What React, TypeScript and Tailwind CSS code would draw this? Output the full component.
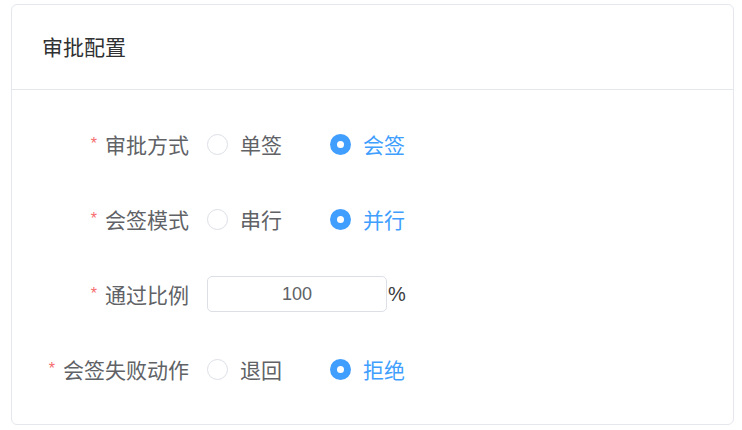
import React from "react";

const font = { fontFamily: '"Liberation Sans", "Noto Sans CJK SC", sans-serif' };

function Radio({ label, checked }: { label: string; checked?: boolean }) {
  return (
    <div className="flex items-center">
      {checked ? (
        <span className="flex h-[21px] w-[21px] items-center justify-center rounded-full bg-[#409eff]">
          <span className="h-[7px] w-[7px] rounded-full bg-white" />
        </span>
      ) : (
        <span className="h-[21px] w-[21px] rounded-full border border-[#dcdfe6] bg-white" />
      )}
      <span className={`ml-[12px] mt-[3px] text-[21px] leading-none ${checked ? "text-[#409eff]" : "text-[#606266]"}`}>{label}</span>
    </div>
  );
}

function Row({ label, children }: { label: string; children: React.ReactNode }) {
  return (
    <div className="flex h-[44px] items-center">
      <div className="flex w-[177px] shrink-0 items-center justify-end text-[21px] leading-none text-[#606266]">
        <span className="mr-[8px] text-[16px] text-[#f56c6c]">*</span>
        <span className="mt-[3px]">{label}</span>
      </div>
      <div className="ml-[18px] flex items-center">{children}</div>
    </div>
  );
}

function RadioPair({ a, b }: { a: string; b: string }) {
  return (
    <div className="flex items-center gap-[48px]">
      <Radio label={a} />
      <Radio label={b} checked />
    </div>
  );
}

export default function App() {
  return (
    <div className="h-[430px] w-[742px] bg-white pl-[11px] pt-[4px]" style={font}>
      <div className="w-[723px] h-[421px] rounded-[6px] border border-[#e4e7ed] bg-white">
        <div className="flex h-[85px] items-center border-b border-[#e4e7ed] pl-[30px] text-[21px] text-[#303133]">
          <span className="mt-[2px]">审批配置</span>
        </div>
        <div className="flex flex-col gap-[31px] pt-[32px]">
          <Row label="审批方式">
            <RadioPair a="单签" b="会签" />
          </Row>
          <Row label="会签模式">
            <RadioPair a="串行" b="并行" />
          </Row>
          <Row label="通过比例">
            <div className="flex h-[36px] w-[180px] items-center justify-center rounded-[5px] border border-[#dcdfe6] text-[18px] text-[#606266]">
              100
            </div>
            <span className="ml-[1px] text-[20px] text-[#3a3b3d]">%</span>
          </Row>
          <Row label="会签失败动作">
            <RadioPair a="退回" b="拒绝" />
          </Row>
        </div>
      </div>
    </div>
  );
}
